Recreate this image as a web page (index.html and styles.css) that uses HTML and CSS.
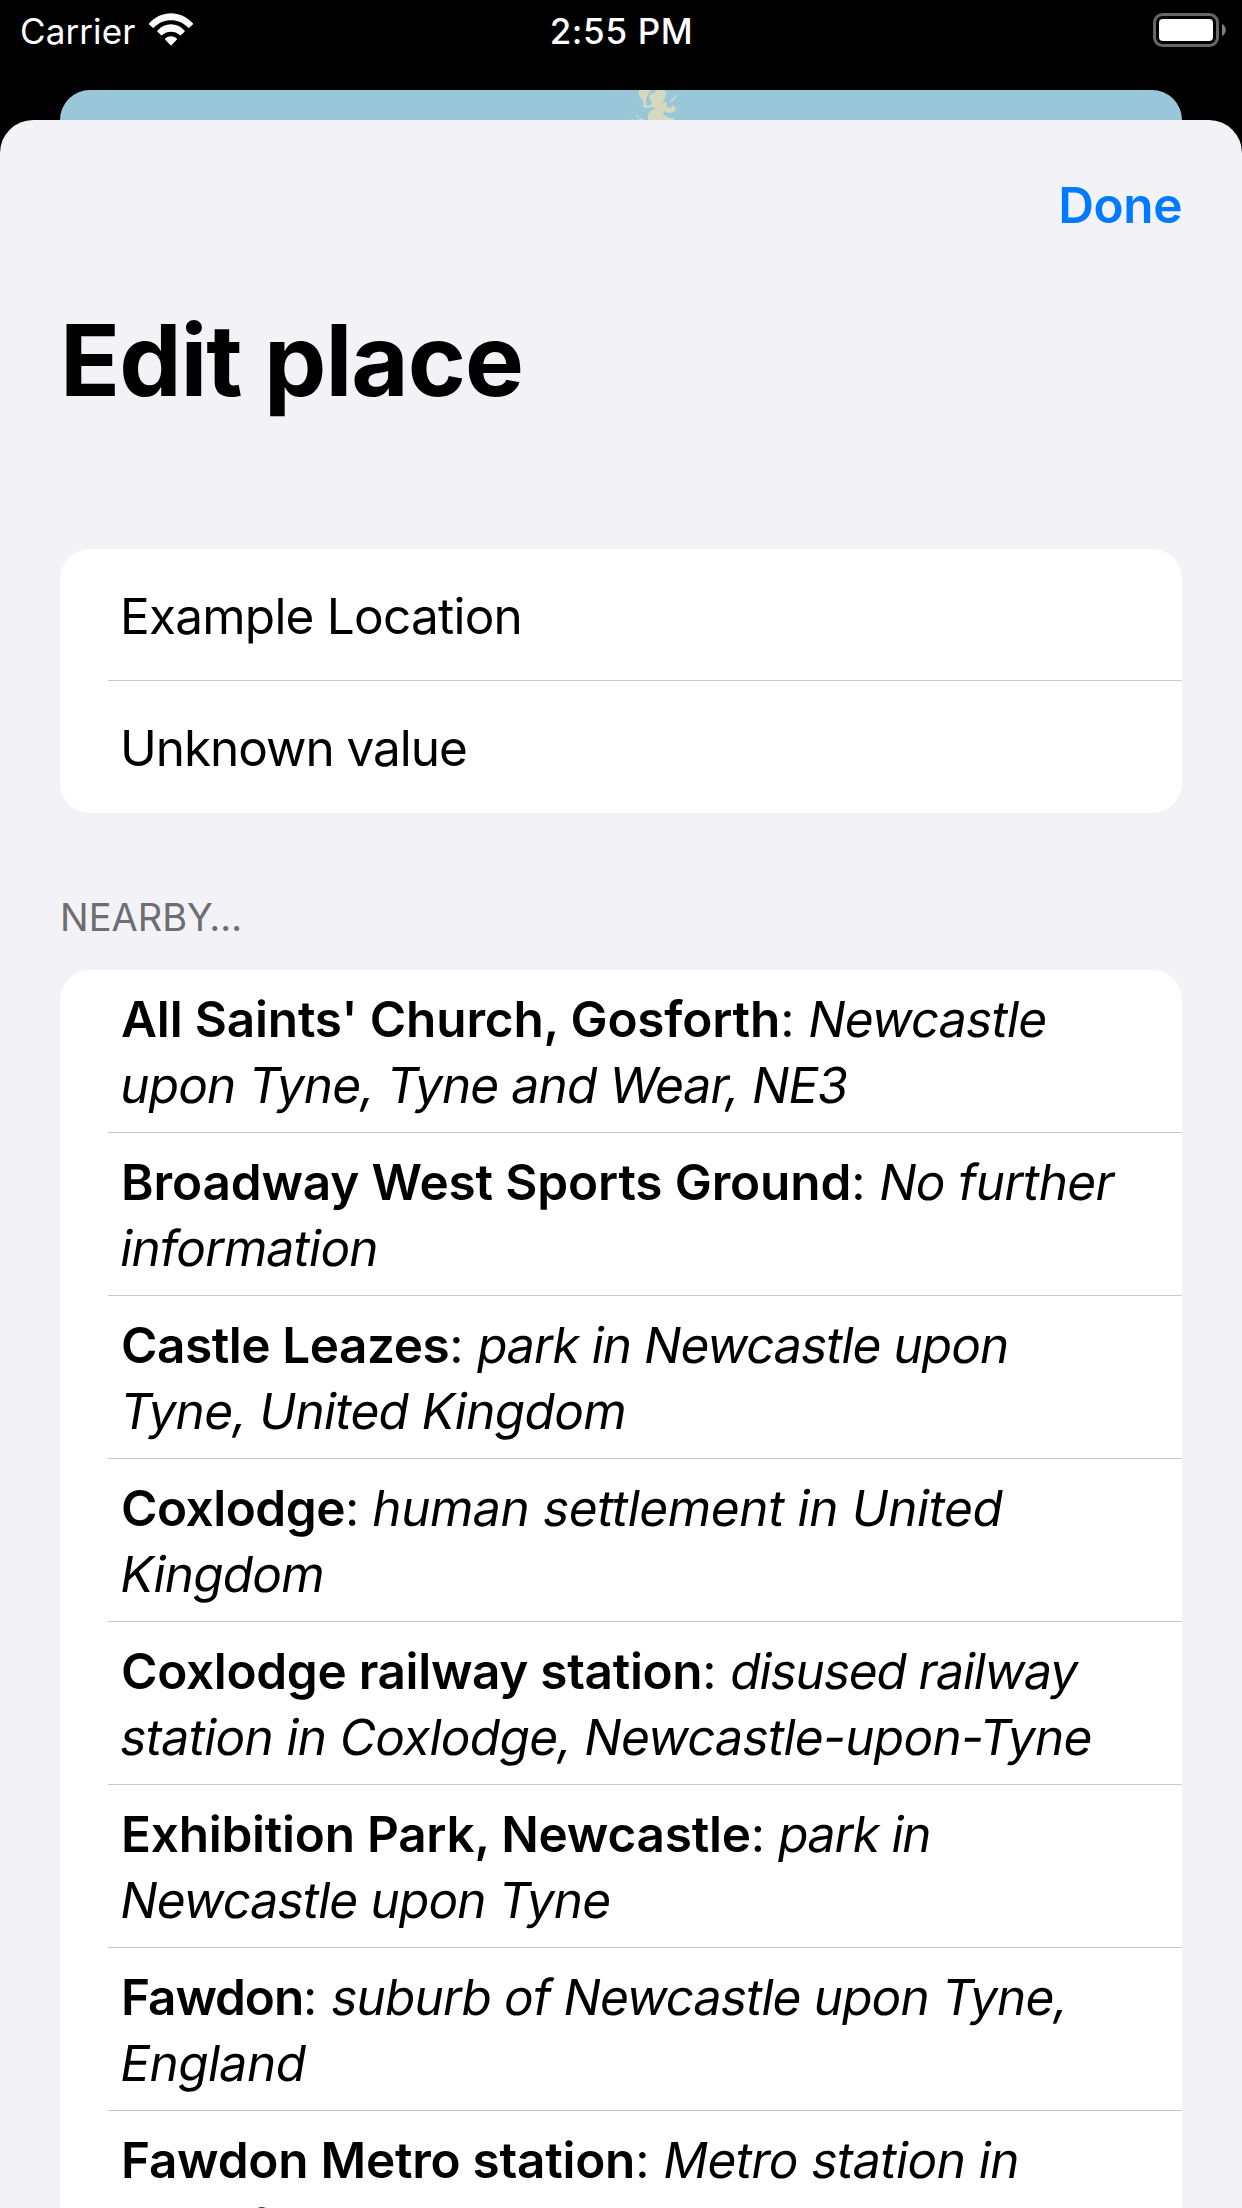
FILE: index.html
```html
<!DOCTYPE html>
<html lang="en">
<head>
<meta charset="utf-8">
<title>Edit place</title>
<link rel="stylesheet" href="styles.css">
</head>
<body>
<header class="status-bar">
  <div class="status-left">
    <span class="carrier">Carrier</span>
    <svg class="wifi" width="46" height="34" viewBox="0 0 46 34">
      <g fill="#fff">
        <path d="M1.2 10.2C13-3.2 33-3.2 44.8 10.2Q45.4 10.9 44.8 11.5L41.5 14.6Q40.8 15.2 40.1 14.5C30.8 4.7 15.200 4.700 5.900 14.500Q5.200 15.200 4.500 14.600L1.200 11.500Q.6 10.900 1.200 10.200Z"/>
        <path d="M9.500 17.500C17 9.200 29 9.200 36.500 17.500Q37.100 18.200 36.500 18.800L33.100 22.100Q32.500 22.700 31.800 22.100C27 17.500 19 17.500 14.200 22.100Q13.500 22.700 12.900 22.100L9.500 18.800Q8.900 18.200 9.500 17.500Z"/>
        <path d="M17.300 25.500C20.500 22.500 25.500 22.500 28.700 25.500Q29.400 26.100 28.700 26.800L23.700 32.100Q23 32.800 22.300 32.100L17.300 26.800Q16.600 26.100 17.300 25.500Z"/>
      </g>
    </svg>
  </div>
  <span class="clock">2:55 PM</span>
  <svg class="battery" width="74" height="34" viewBox="0 0 74 34">
    <rect x="1.500" y="1.500" width="63" height="31" rx="8" fill="none" stroke="#666" stroke-width="3"/>
    <rect x="6" y="6" width="54" height="22" rx="4" fill="#fff"/>
    <path d="M69 11C74 13 74 21 69 23Z" fill="#808080"/>
  </svg>
</header>

<div class="map-sheet">
  <svg class="land" width="60" height="30" viewBox="0 0 60 30">
    <g fill="#d6d9c0">
      <path d="M8.500 0H21L18 5 16 8 16 15 20 16 22 12 19 9 20 5 25 2 28 0H34L36 3 35 9 32 14 36 11 37 17 41 18 43 15 46 18 44 22 38 23 34 21 33 24 39 28 44 28V30H18V24L22 20 26 19 23 17 17 18 12 17 14 15 12 9 9 6Z"/>
      <path d="M47.500 4L44.500 9 39.500 14 41 10Z"/>
      <path d="M6 25L9.500 27 7 28ZM8 30L11 28 14 30ZM1.500 29L4 30H1.500Z"/>
    </g>
  </svg>
</div>

<main class="sheet">
  <nav class="toolbar"><a class="done">Done</a></nav>
  <h1 class="title">Edit place</h1>

  <section class="card fields">
    <div class="row field"><span class="field-name">Example Location</span></div>
    <div class="row field"><span class="field-value">Unknown value</span></div>
  </section>

  <h2 class="section-title">NEARBY…</h2>
  <section class="card nearby">
    <p class="row t1"><b>All Saints' Church, Gosforth</b><span class="sep">: </span><i>Newcastle</i><br><i class="end">upon Tyne, Tyne and Wear, NE3</i></p>
    <p class="row t2"><b>Broadway West Sports Ground</b><span class="sep">: </span><i>No further</i><br><i class="end">information</i></p>
    <p class="row t3"><b>Castle Leazes</b><span class="sep">: </span><i>park in Newcastle upon</i><br><i class="end">Tyne, United Kingdom</i></p>
    <p class="row t4"><b>Coxlodge</b><span class="sep">: </span><i>human settlement in United</i><br><i class="end">Kingdom</i></p>
    <p class="row t5"><b>Coxlodge railway station</b><span class="sep">: </span><i>disused railway</i><br><i class="end">station in Coxlodge, Newcastle-upon-Tyne</i></p>
    <p class="row t6"><b>Exhibition Park, Newcastle</b><span class="sep">: </span><i>park in</i><br><i class="end">Newcastle upon Tyne</i></p>
    <p class="row t7"><b>Fawdon</b><span class="sep">: </span><i>suburb of Newcastle upon Tyne,</i><br><i class="end">England</i></p>
    <p class="row t8"><b>Fawdon Metro station</b><span class="sep">: </span><i>Metro station in</i><br><i class="end">f</i></p>
  </section>
</main>
</body>
</html>
```
FILE: styles.css
```css
* { box-sizing: border-box; }

html, body { height: 2208px; overflow: hidden; }

body {
  margin: 0;
  display: flex;
  flex-direction: column;
  background: #000;
  color: #000;
  font-family: Inter, "Liberation Sans", sans-serif;
  font-size: 49.5px;
  line-height: 66px;
}

h1, h2, p { margin: 0; }

/* Status bar */
.status-bar {
  flex: none;
  height: 90px;
  padding: 13px 15px 0 20px;
  display: grid;
  grid-template-columns: 1fr auto 1fr;
  align-items: start;
  color: #fff;
  font-size: 35px;
  line-height: 36px;
}
.status-left { display: flex; gap: 13px; }
.carrier { letter-spacing: .1px; }
.clock { margin-right: 4px; font-weight: 500; letter-spacing: .65px; }
.battery { justify-self: end; }

/* Edge of the map behind the sheet */
.map-sheet {
  flex: none;
  height: 30px;
  margin: 0 60px;
  padding-left: 570px;
  border-radius: 30px 30px 0 0;
  background: #9ac6d9;
  overflow: hidden;
}
.land { display: block; }

/* Modal sheet */
.sheet {
  flex: 1;
  min-height: 0;
  padding: 0 60px;
  border-radius: 33px 33px 0 0;
  background: #f2f2f7;
  overflow: hidden;
}
.toolbar {
  display: flex;
  justify-content: flex-end;
  padding-top: 52px;
}
.done {
  color: #007aff;
  font-weight: 600;
  letter-spacing: -.4px;
}
.title {
  margin-top: 62px;
  font-size: 99px;
  font-weight: 700;
  line-height: 120px;
  letter-spacing: -1px;
}

.card {
  background: #fff;
  border-radius: 30px;
  overflow: hidden;
}
.fields { margin-top: 129px; }
.row {
  margin-left: 48px;
  padding-left: 12px;
  border-bottom: 1px solid #c6c6c8;
  white-space: nowrap;
}
.row:last-child { border-bottom: 0; }
.field { height: 132px; padding-top: 34px; }
.field-name { letter-spacing: -.77px; }
.field-value { letter-spacing: -1.05px; }

.section-title {
  margin-top: 81px;
  color: #6d6d72;
  font-size: 38px;
  font-weight: 400;
  line-height: 46px;
}
.nearby { margin-top: 30px; }
.nearby .row { height: 163px; padding-top: 16px; }
.row b { margin-left: 1px; font-weight: 600; }
.sep { letter-spacing: -.4px; }

/* Slanted roman letterforms instead of the cursive italic ones */
.row i {
  display: inline-block;
  font-style: normal;
  transform: skewX(-9.5deg);
  transform-origin: 0 39px;
}

/* Tracking for each place, title / first line / second line */
.t1 b { letter-spacing: -.17px; }
.t1 i { letter-spacing: -.72px; }
.t1 .end { letter-spacing: -.8px; }
.t2 b { letter-spacing: -.14px; }
.t2 i { letter-spacing: -.67px; }
.t2 .end { letter-spacing: -.71px; }
.t3 b { letter-spacing: -.45px; }
.t3 i { letter-spacing: -.92px; }
.t3 .end { letter-spacing: -.66px; }
.t4 b { letter-spacing: -.5px; }
.t4 i { letter-spacing: -.36px; }
.t4 .end { letter-spacing: -.76px; }
.t5 b { letter-spacing: -.31px; }
.t5 i { letter-spacing: -1.07px; }
.t5 .end { letter-spacing: -.65px; }
.t6 b { letter-spacing: -.24px; }
.t6 i { letter-spacing: -1.18px; }
.t6 .end { letter-spacing: -.83px; }
.t7 b { letter-spacing: -1.1px; }
.t7 i { letter-spacing: -.83px; }
.t7 .end { letter-spacing: -.5px; }
.t8 b { letter-spacing: -.24px; }
.t8 i { letter-spacing: -.5px; }
.t8 .end { margin-left: 124px; padding-top: 1px; }
```
